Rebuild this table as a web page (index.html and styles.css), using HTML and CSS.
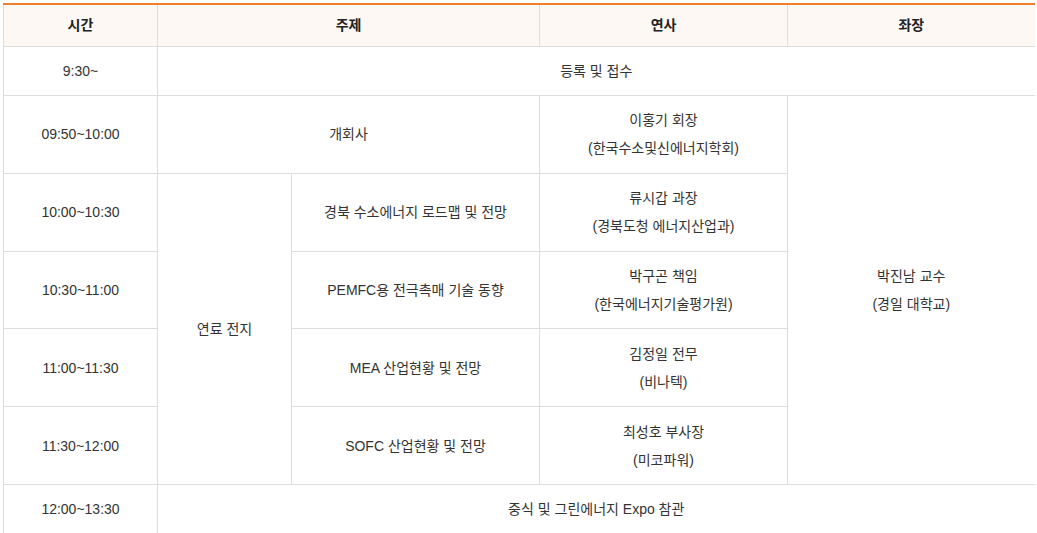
FILE: index.html
```html
<!DOCTYPE html>
<html lang="ko">
<head>
<meta charset="utf-8">
<title>프로그램</title>
<link rel="stylesheet" href="styles.css">
</head>
<body>
<div class="wrap">
<table class="program">
  <colgroup>
    <col class="c-time">
    <col class="c-topic-a">
    <col class="c-topic-b">
    <col class="c-speaker">
    <col class="c-chair">
  </colgroup>
  <thead>
    <tr>
      <th>시간</th>
      <th colspan="2">주제</th>
      <th>연사</th>
      <th>좌장</th>
    </tr>
  </thead>
  <tbody>
    <tr>
      <td>9:30~</td>
      <td colspan="4">등록 및 접수</td>
    </tr>
    <tr>
      <td>09:50~10:00</td>
      <td colspan="2">개회사</td>
      <td class="dual">이홍기 회장<br>(한국수소및신에너지학회)</td>
      <td rowspan="5">박진남 교수<br>(경일 대학교)</td>
    </tr>
    <tr>
      <td>10:00~10:30</td>
      <td rowspan="4">연료 전지</td>
      <td>경북 수소에너지 로드맵 및 전망</td>
      <td class="dual">류시갑 과장<br>(경북도청 에너지산업과)</td>
    </tr>
    <tr>
      <td>10:30~11:00</td>
      <td>PEMFC용 전극촉매 기술 동향</td>
      <td class="dual">박구곤 책임<br>(한국에너지기술평가원)</td>
    </tr>
    <tr>
      <td>11:00~11:30</td>
      <td>MEA 산업현황 및 전망</td>
      <td class="dual">김정일 전무<br>(비나텍)</td>
    </tr>
    <tr>
      <td>11:30~12:00</td>
      <td>SOFC 산업현황 및 전망</td>
      <td class="dual">최성호 부사장<br>(미코파워)</td>
    </tr>
    <tr>
      <td>12:00~13:30</td>
      <td colspan="4">중식 및 그린에너지 Expo 참관</td>
    </tr>
  </tbody>
</table>
</div>
</body>
</html>
```

FILE: styles.css
```css
html, body {
  margin: 0;
  padding: 0;
  background: #ffffff;
}

.wrap {
  padding: 3px 3px 0 3px;
}

.program {
  width: 1031px;
  border-collapse: collapse;
  table-layout: fixed;
  border-top: 2px solid #ef7e2f;
  font-family: "Liberation Sans", "Noto Sans CJK KR", sans-serif;
  font-size: 14px;
  color: #333333;
}

.c-time { width: 154px; }
.c-topic-a { width: 134px; }
.c-topic-b { width: 248px; }
.c-speaker { width: 248px; }
.c-chair { width: 247px; }

.program th,
.program td {
  text-align: center;
  vertical-align: middle;
  border-left: 1px solid #dddddd;
  border-bottom: 1px solid #dddddd;
}

.program th {
  background: #fdf8f4;
  color: #222222;
  font-weight: bold;
  font-size: 14px;
  line-height: 21px;
  padding: 10px 10px;
}

.program td {
  line-height: 28px;
  padding: 10px;
  font-weight: normal;
}

.program td.dual {
  padding-top: 10.4px;
  padding-bottom: 10.4px;
}
```
